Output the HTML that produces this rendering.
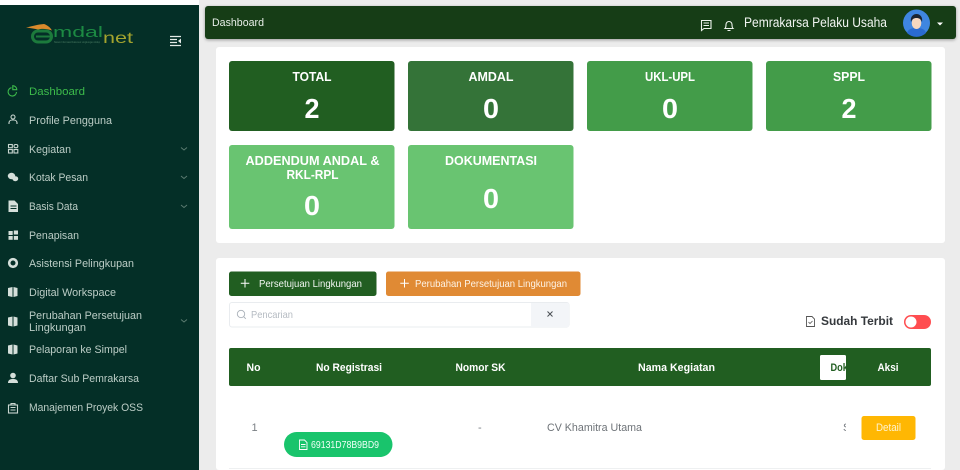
<!DOCTYPE html>
<html lang="id">
<head>
<meta charset="utf-8">
<title>Dashboard</title>
<style>
html,body{margin:0;padding:0;width:960px;height:470px;overflow:hidden;background:#ececec}
svg{display:block;font-family:"Liberation Sans","DejaVu Sans",sans-serif}
.m{font-size:11px;fill:#bccdc6}
.h{font-size:11px;fill:#fff;font-weight:700;text-anchor:middle}
.st{font-size:12.5px;fill:#fff;font-weight:700;text-anchor:middle}
.n{font-size:28px;fill:#fff;font-weight:700;text-anchor:middle}
.i{fill:none;stroke:#c9d6d0;stroke-width:1.1}
.f{fill:#d5dfda}
</style>
</head>
<body>
<svg width="960" height="470" viewBox="0 0 960 470" xmlns="http://www.w3.org/2000/svg">
<defs><filter id="s" x="-2%" y="-20%" width="104%" height="150%"><feDropShadow dx="0" dy="1" stdDeviation="1.5" flood-color="#000" flood-opacity=".35"/></filter></defs>
<rect width="960" height="470" fill="#ececec"/>
<rect width="199" height="5" fill="#fff"/>
<rect y="5" width="199" height="465" fill="#042f27"/>

<!-- Logo -->
<path d="M26 27.500C33 26 38 24.500 44 24C47 25 50 27 52 30.500C46 28.500 42 28.500 38 29.500C34 28.500 30 28 26 27.500Z" fill="#d98a2c"/>
<rect x="32.500" y="31" width="19" height="11" rx="5.500" fill="none" stroke="#1c7a3c" stroke-width="3"/>
<path d="M36 36.500H51" stroke="#1c7a3c" stroke-width="2"/>
<text x="53" y="37" font-size="15" fill="#1c8a43" textLength="50" lengthAdjust="spacingAndGlyphs">mdal</text>
<text x="103" y="43" font-size="16" fill="#a3a32e" textLength="30" lengthAdjust="spacingAndGlyphs">net</text>
<text x="54" y="43" font-size="3" fill="#4d7f65" textLength="46" lengthAdjust="spacingAndGlyphs">Sistem Informasi Dokumen Lingkungan Hidup</text>
<!-- collapse -->
<path d="M170 36.500H181M170 39.500H177M170 42.500H177M170 45.500H181" stroke="#e4ebe7" stroke-width="1.200"/>
<path d="M181 38.500V43.500L178 41Z" fill="#e4ebe7"/>

<!-- Sidebar icons -->
<g class="i">
<path d="M16.500 92a4.200 4.200 0 1 1-5-4.300" stroke="#3dbb4b"/><path d="M12.800 85.700a4 4 0 0 1 4 4h-4Z" stroke="#3dbb4b"/>
<circle cx="13" cy="117" r="2"/><path d="M9 124v-1.300a3 3 0 0 1 3-2.700h2a3 3 0 0 1 3 2.700V124"/>
<rect x="8.500" y="144.500" width="3.800" height="3.200"/><rect x="14" y="144.500" width="3.800" height="3.200" rx="1.500"/><rect x="8.500" y="149.500" width="3.800" height="3.500"/><rect x="14" y="149.500" width="3.800" height="3.500"/>
<path d="M181 147.500l3 2.500 3-2.500M181 176l3 2.500 3-2.500M181 205l3 2.500 3-2.500M181 319.500l3 2.500 3-2.500" stroke="#5d7d72" stroke-width=".9"/>
</g>
<g class="f">
<ellipse cx="11.500" cy="176" rx="3.700" ry="3.200"/><ellipse cx="15.300" cy="178.700" rx="2.900" ry="2.500"/>
<path d="M8.500 200.500h6l3.500 3.500v8h-9.500Z"/>
<rect x="8.500" y="231" width="4.200" height="4"/><rect x="13.800" y="230.500" width="4.200" height="4"/><rect x="8.500" y="236" width="4.200" height="3.800"/><rect x="13.800" y="236" width="4.200" height="3.800"/>
<path d="M8 288l4.500-1v10l-4.500-1ZM13.500 287l4 1v8l-4 1Z"/>
<path d="M8 317.500l4.500-1v10l-4.500-1ZM13.500 316.500l4 1v8l-4 1Z"/>
<path d="M8 345.500l4.500-1v10l-4.500-1ZM13.500 344.500l4 1v8l-4 1Z"/>
<circle cx="13" cy="375.500" r="2.800"/><path d="M8 383c0-3 2-4 5-4s5 1 5 4Z"/>
</g>
<path d="M10.500 206h6M10.500 208.500h6" stroke="#042f27" stroke-width=".9"/>
<circle cx="13" cy="263" r="3.800" fill="none" stroke="#d5dfda" stroke-width="2.600"/>
<g class="i" stroke-width="1"><rect x="8.500" y="405" width="9" height="8"/><path d="M11 405v-1.500h4v1.500M10.500 407.500h5M10.500 410h5"/></g>

<!-- Sidebar labels -->
<text class="m" x="29" y="95" style="fill:#3dbb4b" textLength="56" lengthAdjust="spacingAndGlyphs">Dashboard</text>
<text class="m" x="29" y="124" textLength="83" lengthAdjust="spacingAndGlyphs">Profile Pengguna</text>
<text class="m" x="29" y="153" textLength="42" lengthAdjust="spacingAndGlyphs">Kegiatan</text>
<text class="m" x="29" y="181" textLength="59" lengthAdjust="spacingAndGlyphs">Kotak Pesan</text>
<text class="m" x="29" y="210" textLength="49" lengthAdjust="spacingAndGlyphs">Basis Data</text>
<text class="m" x="29" y="239" textLength="50" lengthAdjust="spacingAndGlyphs">Penapisan</text>
<text class="m" x="29" y="267" textLength="105" lengthAdjust="spacingAndGlyphs">Asistensi Pelingkupan</text>
<text class="m" x="29" y="296" textLength="87" lengthAdjust="spacingAndGlyphs">Digital Workspace</text>
<text class="m" x="29" y="319" textLength="113" lengthAdjust="spacingAndGlyphs">Perubahan Persetujuan</text>
<text class="m" x="29" y="331" textLength="57" lengthAdjust="spacingAndGlyphs">Lingkungan</text>
<text class="m" x="29" y="353" textLength="98" lengthAdjust="spacingAndGlyphs">Pelaporan ke Simpel</text>
<text class="m" x="29" y="382" textLength="110" lengthAdjust="spacingAndGlyphs">Daftar Sub Pemrakarsa</text>
<text class="m" x="29" y="411" textLength="114" lengthAdjust="spacingAndGlyphs">Manajemen Proyek OSS</text>

<!-- Header -->
<rect x="205" y="6" width="751" height="33" rx="3" fill="#163d17" filter="url(#s)"/>
<text x="212" y="26" font-size="11" fill="#e8eee8" textLength="52" lengthAdjust="spacingAndGlyphs">Dashboard</text>
<path d="M701.500 20.500h9.500v8h-7l-2.500 2Z" fill="none" stroke="#eef3ee" stroke-width="1.100"/>
<path d="M703.500 23h5.500M703.500 25.500h5.500" stroke="#eef3ee"/>
<path d="M725 28.500c1-1 1-2 1-4a3 3 0 0 1 6 0c0 2 0 3 1 4ZM727.500 30.500h3" fill="none" stroke="#eef3ee" stroke-width="1.100"/>
<text x="744" y="27" font-size="13.500" fill="#f1f5f1" textLength="143" lengthAdjust="spacingAndGlyphs">Pemrakarsa Pelaku Usaha</text>
<circle cx="916.500" cy="23" r="13.500" fill="#3f86e0"/>
<path d="M907 33c1-4 5-5 9.500-5s8.500 1 9.500 5a13.500 13.500 0 0 1-19 0Z" fill="#2a6bd0"/>
<ellipse cx="916.500" cy="23" rx="4.800" ry="6" fill="#f6d7bf"/>
<path d="M911 22c-1-5 2-8 5.500-8s6.500 3 5.500 8c-1-3-3-4-5.500-4s-4.500 1-5.500 4Z" fill="#1b2432"/>
<path d="M937 22.500h6l-3 3Z" fill="#fff"/>

<!-- Card 1 -->
<rect x="216" y="47" width="729" height="196" rx="3" fill="#fff"/>
<rect x="229" y="61" width="165.500" height="70" rx="3" fill="#215e21"/>
<rect x="408" y="61" width="165.500" height="70" rx="3" fill="#347338"/>
<rect x="587" y="61" width="165.500" height="70" rx="3" fill="#439c49"/>
<rect x="766" y="61" width="165.500" height="70" rx="3" fill="#439c49"/>
<rect x="229" y="145" width="165.500" height="84" rx="3" fill="#69c471"/>
<rect x="408" y="145" width="165.500" height="84" rx="3" fill="#69c471"/>
<text class="st" x="312" y="81" textLength="39" lengthAdjust="spacingAndGlyphs">TOTAL</text>
<text class="n" x="312" y="118" textLength="15" lengthAdjust="spacingAndGlyphs">2</text>
<text class="st" x="491" y="81" textLength="45" lengthAdjust="spacingAndGlyphs">AMDAL</text>
<text class="n" x="491" y="118" textLength="16" lengthAdjust="spacingAndGlyphs">0</text>
<text class="st" x="670" y="81" textLength="50" lengthAdjust="spacingAndGlyphs">UKL-UPL</text>
<text class="n" x="670" y="118" textLength="16" lengthAdjust="spacingAndGlyphs">0</text>
<text class="st" x="849" y="81" textLength="32" lengthAdjust="spacingAndGlyphs">SPPL</text>
<text class="n" x="849" y="118" textLength="15" lengthAdjust="spacingAndGlyphs">2</text>
<text class="st" x="312.500" y="165" textLength="134" lengthAdjust="spacingAndGlyphs">ADDENDUM ANDAL &amp;</text>
<text class="st" x="312.500" y="179" textLength="52" lengthAdjust="spacingAndGlyphs">RKL-RPL</text>
<text class="n" x="312" y="215" textLength="16" lengthAdjust="spacingAndGlyphs">0</text>
<text class="st" x="491" y="165" textLength="92" lengthAdjust="spacingAndGlyphs">DOKUMENTASI</text>
<text class="n" x="491" y="208" textLength="16" lengthAdjust="spacingAndGlyphs">0</text>

<!-- Card 2 -->
<rect x="216" y="258" width="729" height="212" rx="3" fill="#fff"/>
<rect x="229" y="271.500" width="147.500" height="24.500" rx="2.500" fill="#215e21"/>
<path d="M245 279v8.500M240.800 283.200h8.500" stroke="#fff" stroke-width="1"/>
<text x="259" y="287" font-size="10.500" fill="#f2f6f2" textLength="103" lengthAdjust="spacingAndGlyphs">Persetujuan Lingkungan</text>
<rect x="386" y="271.500" width="194.500" height="24.500" rx="2.500" fill="#e08a34"/>
<path d="M404.500 279v8.500M400.300 283.200h8.500" stroke="#fff" stroke-width="1"/>
<text x="415" y="287" font-size="10.500" fill="#fdf3e6" textLength="152" lengthAdjust="spacingAndGlyphs">Perubahan Persetujuan Lingkungan</text>

<rect x="229.500" y="302.500" width="339.500" height="24.500" rx="2.500" fill="#fff" stroke="#e9ecef"/>
<path d="M531 303h36.500a1.500 1.500 0 0 1 1.500 1.500v21a1.500 1.500 0 0 1-1.500 1.500H531Z" fill="#f3f5f8"/>
<circle cx="241" cy="314" r="3.700" fill="none" stroke="#a9b0b8" stroke-width=".9"/>
<path d="M243.800 316.800l2 2" stroke="#a9b0b8" stroke-width=".9"/>
<text x="251" y="318" font-size="10.500" fill="#b5bbc2" textLength="42" lengthAdjust="spacingAndGlyphs">Pencarian</text>
<path d="M547.500 311.500l5 5M552.500 311.500l-5 5" stroke="#4a4f55" stroke-width="1"/>

<path d="M806.500 316.500h5.500l2.500 2.500v7.500h-8Z" fill="none" stroke="#555" stroke-width=".9"/>
<path d="M808.500 322l1.500 1.500 2.500-2.500" fill="none" stroke="#555" stroke-width=".8"/>
<text x="821" y="325" font-size="12" font-weight="700" fill="#34383c" textLength="72" lengthAdjust="spacingAndGlyphs">Sudah Terbit</text>
<rect x="904" y="315" width="27" height="14" rx="7" fill="#ff4d50"/>
<circle cx="911" cy="322" r="5.500" fill="#fff"/>

<!-- Table -->
<rect x="229" y="348" width="702" height="38" rx="2" fill="#215e21"/>
<text class="h" x="253.500" y="371" textLength="14" lengthAdjust="spacingAndGlyphs">No</text>
<text class="h" x="349" y="371" textLength="66" lengthAdjust="spacingAndGlyphs">No Registrasi</text>
<text class="h" x="480.500" y="371" textLength="50" lengthAdjust="spacingAndGlyphs">Nomor SK</text>
<text class="h" x="676.500" y="371" textLength="77" lengthAdjust="spacingAndGlyphs">Nama Kegiatan</text>
<text class="h" x="888" y="371" textLength="21" lengthAdjust="spacingAndGlyphs">Aksi</text>
<rect x="820" y="355" width="26" height="25" rx="1.500" fill="#fff"/>
<svg x="820" y="355" width="26" height="25" viewBox="0 0 26 25"><text x="10.500" y="16" font-size="11" font-weight="700" fill="#215e21" textLength="42" lengthAdjust="spacingAndGlyphs">Dokumen</text></svg>

<text x="251.500" y="431" font-size="11" fill="#7a7f84">1</text>
<text x="478" y="431" font-size="11" fill="#7a7f84">-</text>
<text x="547" y="431" font-size="11" fill="#6e7378" textLength="95" lengthAdjust="spacingAndGlyphs">CV Khamitra Utama</text>
<svg x="840" y="420" width="6" height="16" viewBox="0 0 6 16"><text x="3" y="11" font-size="11" fill="#7a7f84">S</text></svg>
<rect x="284" y="432" width="108.500" height="25" rx="12.500" fill="#19c46c"/>
<path d="M299.500 440h5l2.500 2.500v7h-7.500ZM301 444.500h4.500M301 446.800h4.500" fill="none" stroke="#fff" stroke-width=".9"/>
<text x="311" y="448" font-size="10" fill="#f2fff8" textLength="68" lengthAdjust="spacingAndGlyphs">69131D78B9BD9</text>
<rect x="861.500" y="416" width="54" height="24" rx="2.500" fill="#ffb703"/>
<text x="888.500" y="431" font-size="11" fill="#fff3cf" text-anchor="middle" textLength="25" lengthAdjust="spacingAndGlyphs">Detail</text>
<rect x="229" y="468" width="702" height="1" fill="#eef0f1"/>
</svg>
</body>
</html>
